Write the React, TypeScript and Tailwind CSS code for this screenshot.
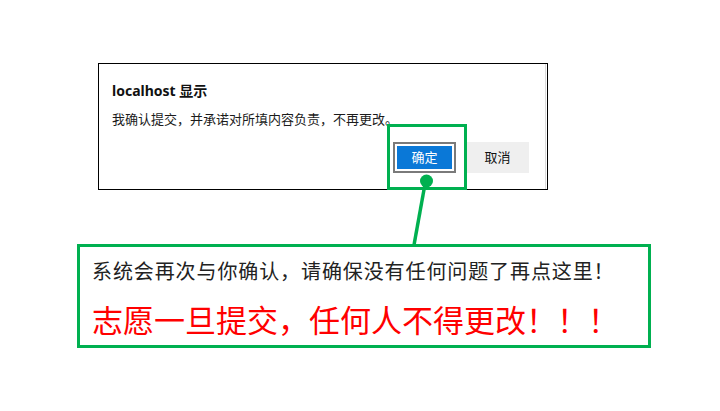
export default function App() {
  return (
    <div className="relative w-[720px] h-[411px] overflow-hidden bg-white font-['Noto_Sans','Noto_Sans_CJK_SC',sans-serif] [text-spacing-trim:space-all]">
      {/* Browser confirm dialog */}
      <div className="ml-[98px] mt-[63px] w-[450px] h-[127px] border border-black bg-white shadow-[inset_-1px_0_0_#fff,inset_-2px_0_0_#dadada]">
        <div className="pl-[13px] pr-[18px] pt-[17px]">
          <div className="h-[20px] text-[14px] leading-[20px] font-bold text-[#111]">
            localhost 显示
          </div>
          <div className="mt-[9px] h-[18px] text-[13px] leading-[18px] text-[#1b1b1b]">
            我确认提交，并承诺对所填内容负责，不再更改。
          </div>
          <div className="mt-[14px] flex justify-end gap-[10px]">
            <button className="w-[63px] h-[31px] border-2 border-[#7a7a7a] bg-white p-[2px]">
              <span className="flex h-full w-full items-center justify-center bg-[#0a78d7] text-[13px] text-white">
                确定
              </span>
            </button>
            <button className="w-[63px] h-[31px] flex items-center justify-center bg-[#efefef] text-[13px] text-[#111]">
              取消
            </button>
          </div>
        </div>
      </div>

      {/* Callout */}
      <div className="ml-[77px] mt-[54px] w-[574px] h-[104px] border-[3px] border-[#00b050] bg-white pl-[12px] pt-[10px] font-['Noto_Sans_CJK_SC',sans-serif]">
        <div className="h-[28px] text-[20px] leading-[28px] tracking-[0.9px] text-[#222] whitespace-nowrap">
          系统会再次与你确认，请确保没有任何问题了再点这里！
        </div>
        <div className="mt-[14px] h-[40px] text-[31px] leading-[40px] text-[#ff0000] whitespace-nowrap">
          志愿一旦提交，任何人不得更改！！！
        </div>
      </div>

      {/* Highlight around the confirm button */}
      <div className="absolute left-[387px] top-[124px] w-[80px] h-[66px] border-[3px] border-[#00b050]" />

      {/* Connector */}
      <svg className="absolute left-0 top-0 pointer-events-none" width="720" height="411">
        <line x1="425" y1="184" x2="414" y2="245" stroke="#00b050" strokeWidth="3.5" />
        <circle cx="426.5" cy="181" r="6.5" fill="#00b050" />
      </svg>
    </div>
  );
}
